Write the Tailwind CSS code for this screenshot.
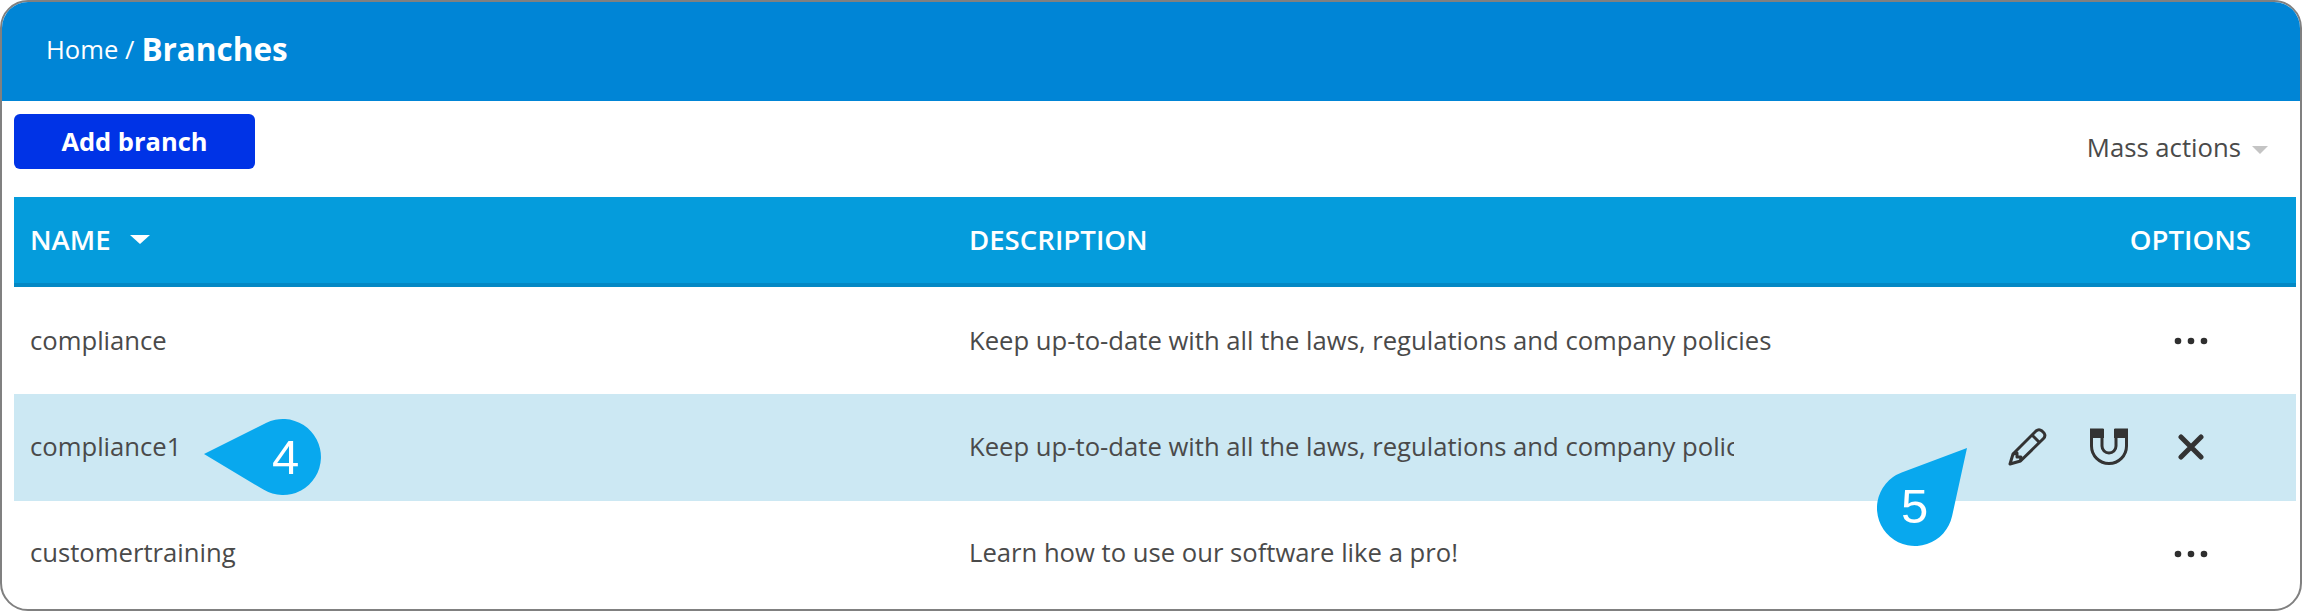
<!DOCTYPE html>
<html lang="en">
<head>
    <meta charset="UTF-8">
    <title>Branches</title>
    <script src="https://cdn.jsdelivr.net/npm/@tailwindcss/browser@4"></script>
</head>
<body class="bg-white font-['Open_Sans',sans-serif]">
    <div class="relative w-[2302px] h-[611px] overflow-hidden">
        <div class="h-full rounded-[28px] border-2 border-[#808080] overflow-hidden bg-white">
            <!-- header -->
            <div class="h-[99px] bg-[#0085d6] flex items-center pl-[44px] text-white pb-1">
                <span class="text-[25.600px] mt-[2px]">Home /</span>
                <span class="text-[31.500px] font-bold ml-[7px] -mt-[2px]">Branches</span>
            </div>

            <!-- toolbar -->
            <div class="h-[96px] pl-[12px] pr-[32px] flex justify-between">
                <button class="mt-[13px] w-[241px] h-[55px] rounded-[6px] bg-[#0033e6] text-white text-[25.500px] font-bold">Add branch</button>
                <div class="mt-[27px] h-[40px] flex items-center text-[25.700px] text-[#4a4a4a]">
                    Mass actions
                    <span class="ml-[11px] mt-[3px] border-x-[8px] border-x-transparent border-t-[8px] border-t-[#c4c4c4]"></span>
                </div>
            </div>

            <!-- table -->
            <div class="ml-[12px] mr-[4px] text-[25.650px] text-[#4a4a4a]">
                <div class="h-[90px] bg-[#059cdc] border-b-4 border-[#0488c4] text-white text-[27.600px] font-semibold grid grid-cols-[939px_1fr_auto] items-center pl-[16px] pr-[45px]">
                    <div class="flex items-center">
                        NAME
                        <span class="ml-[19px] mb-[1px] border-x-[10px] border-x-transparent border-t-[9px] border-t-white"></span>
                    </div>
                    <div>DESCRIPTION</div>
                    <div>OPTIONS</div>
                </div>

                <div class="h-[107px] grid grid-cols-[939px_1fr_auto] items-center pl-[16px] pr-[88px] pt-[1px]">
                    <div>compliance</div>
                    <div class="w-[820px] whitespace-nowrap">Keep up-to-date with all the laws, regulations and company policies</div>
                    <svg class="w-[34px] h-[8px]" viewBox="0 0 34 8" fill="#2f2f2f"><circle cx="4" cy="4" r="3.3"/><circle cx="17" cy="4" r="3.3"/><circle cx="30" cy="4" r="3.3"/></svg>
                </div>

                <div class="h-[107px] bg-[#cce8f3] grid grid-cols-[939px_1fr_auto] items-center pl-[16px] pr-[92px] pb-[1px]">
                    <div>compliance1</div>
                    <div class="w-[765px] whitespace-nowrap overflow-hidden">Keep up-to-date with all the laws, regulations and company policies</div>
                    <div class="flex items-center">
                        <svg class="w-[40px] h-[40px] mr-[42px]" viewBox="0 0 40 40" fill="none" stroke="#333" stroke-width="3" stroke-linejoin="round">
                            <path d="M3 37 L6 27 L29 4 Q32 1.500 35 4 L37 6 Q39 9 36.500 11.500 L13.500 34 Z"/>
                            <path d="M25 8 L33 16 M6 27 L10 26 L10 30 L14 30 L13.500 34"/>
                        </svg>
                        <svg class="w-[40px] h-[38px] mr-[49px]" viewBox="0 0 40 38">
                            <path d="M2.500 2 H13 V18 A7 7 0 0 0 27 18 V2 H37.500 V18 A17.500 17.500 0 0 1 2.500 18 Z" fill="none" stroke="#333" stroke-width="3"/>
                            <rect x="1" y="1" width="14" height="9" fill="#333"/>
                            <rect x="25" y="1" width="14" height="9" fill="#333"/>
                        </svg>
                        <svg class="w-[26px] h-[26px]" viewBox="0 0 26 26" stroke="#333" stroke-width="5" stroke-linecap="round"><path d="M3 3 L23 23 M23 3 L3 23"/></svg>
                    </div>
                </div>

                <div class="h-[105px] grid grid-cols-[939px_1fr_auto] items-center pl-[16px] pr-[88px]">
                    <div>customertraining</div>
                    <div>Learn how to use our software like a pro!</div>
                    <svg class="w-[34px] h-[8px]" viewBox="0 0 34 8" fill="#2f2f2f"><circle cx="4" cy="4" r="3.3"/><circle cx="17" cy="4" r="3.3"/><circle cx="30" cy="4" r="3.3"/></svg>
                </div>
            </div>
        </div>

        <!-- callouts -->
        <div class="absolute left-[204px] top-[419px] w-[118px] h-[77px]">
            <svg class="absolute inset-0" width="118" height="77" viewBox="0 0 118 77"><path d="M0 35 L62 4 A38 38 0 1 1 59.400 70.600 Z" fill="#08a8ee"/></svg>
            <span class="absolute left-[68px] top-[10px] w-[26px] text-center text-[49px] leading-[56px] text-white font-['Liberation_Sans',sans-serif]">4</span>
        </div>
        <div class="absolute left-[1877px] top-[447px] w-[92px] h-[100px]">
            <svg class="absolute inset-0" width="92" height="100" viewBox="0 0 92 100"><path d="M90 1 L75.100 69.100 A38 38 0 1 1 24.700 25.400 Z" fill="#08a8ee"/></svg>
            <span class="absolute left-[24px] top-[31px] w-[26px] text-center text-[49px] leading-[56px] text-white font-['Liberation_Sans',sans-serif]">5</span>
        </div>
    </div>
</body>
</html>
